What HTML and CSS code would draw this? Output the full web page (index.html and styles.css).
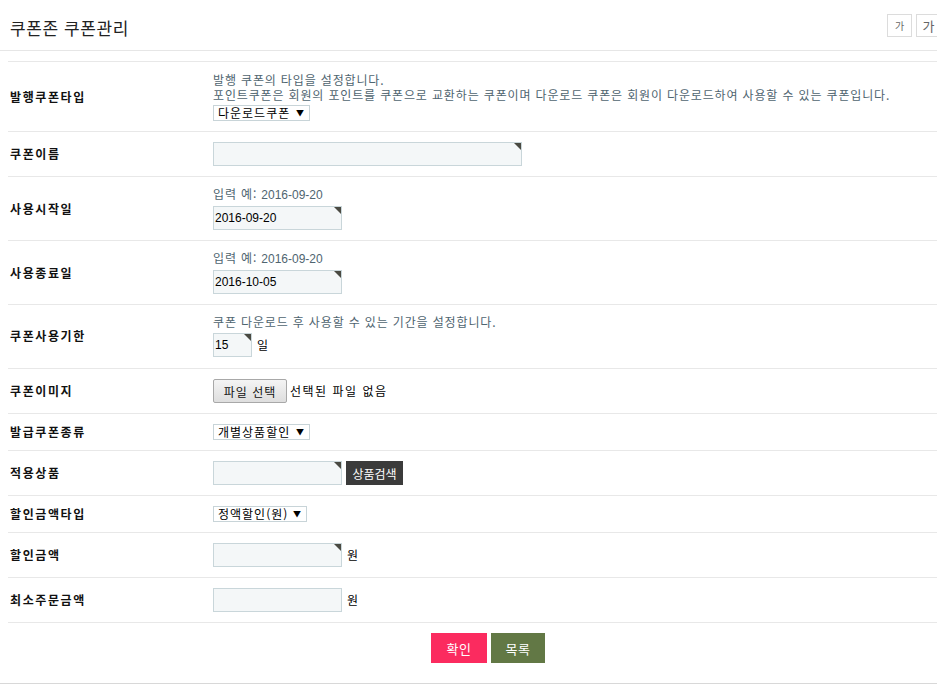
FILE: index.html
```html
<!DOCTYPE html>
<html lang="ko">
<head>
<meta charset="utf-8">
<title>쿠폰존 쿠폰관리</title>
<link rel="stylesheet" href="styles.css">
</head>
<body>
<header class="head">
  <h1 class="title">쿠폰존 쿠폰관리</h1>
  <div class="fontbtns">
    <button class="fbtn small" type="button">가</button>
    <button class="fbtn big" type="button">가</button>
  </div>
</header>
<main class="wrap">
  <div class="form">
    <div class="row">
      <div class="label">발행쿠폰타입</div>
      <div class="value stack wide">
        <p class="hint">발행 쿠폰의 타입을 설정합니다.<br>포인트쿠폰은 회원의 포인트를 쿠폰으로 교환하는 쿠폰이며 다운로드 쿠폰은 회원이 다운로드하여 사용할 수 있는 쿠폰입니다.</p>
        <div class="sel w96"><span>다운로드쿠폰</span><span class="arr">▼</span></div>
      </div>
    </div>
    <div class="row">
      <div class="label">쿠폰이름</div>
      <div class="value"><span class="inp req w309"></span></div>
    </div>
    <div class="row">
      <div class="label">사용시작일</div>
      <div class="value stack">
        <p class="hint">입력 예: <span class="num">2016-09-20</span></p>
        <span class="inp req w129">2016-09-20</span>
      </div>
    </div>
    <div class="row">
      <div class="label">사용종료일</div>
      <div class="value stack">
        <p class="hint">입력 예: <span class="num">2016-09-20</span></p>
        <span class="inp req w129">2016-10-05</span>
      </div>
    </div>
    <div class="row tall">
      <div class="label">쿠폰사용기한</div>
      <div class="value stack">
        <p class="hint">쿠폰 다운로드 후 사용할 수 있는 기간을 설정합니다.</p>
        <div class="line"><span class="inp req w39">15</span><span class="unit">일</span></div>
      </div>
    </div>
    <div class="row">
      <div class="label">쿠폰이미지</div>
      <div class="value line"><button class="filebtn" type="button">파일 선택</button><span class="unit">선택된 파일 없음</span></div>
    </div>
    <div class="row">
      <div class="label">발급쿠폰종류</div>
      <div class="value"><div class="sel w96"><span>개별상품할인</span><span class="arr">▼</span></div></div>
    </div>
    <div class="row">
      <div class="label">적용상품</div>
      <div class="value line"><span class="inp req w129"></span><button class="darkbtn" type="button">상품검색</button></div>
    </div>
    <div class="row">
      <div class="label">할인금액타입</div>
      <div class="value"><div class="sel w93"><span>정액할인(원)</span><span class="arr">▼</span></div></div>
    </div>
    <div class="row">
      <div class="label">할인금액</div>
      <div class="value line"><span class="inp req w129"></span><span class="unit">원</span></div>
    </div>
    <div class="row">
      <div class="label">최소주문금액</div>
      <div class="value line"><span class="inp w129"></span><span class="unit">원</span></div>
    </div>
  </div>
  <div class="actions">
    <button class="btn ok" type="button">확인</button>
    <button class="btn list" type="button">목록</button>
  </div>
</main>
</body>
</html>
```
FILE: styles.css
```css
* { box-sizing: border-box; }
html, body { margin: 0; padding: 0; background: #fff; }
body {
  font-family: "Noto Sans CJK KR", "Noto Sans", sans-serif;
  font-size: 12px;
  color: #000;
  width: 937px;
  overflow: hidden;
}
.head {
  height: 51px;
  border-bottom: 1px solid #e6e6e6;
  display: flex;
  justify-content: space-between;
  align-items: flex-start;
}
.title {
  margin: 0;
  padding: 17px 0 0 10px;
  font-size: 17px;
  font-weight: 400;
  line-height: 22px;
  color: #222;
  letter-spacing: 0.6px;
}
.fontbtns {
  display: flex;
  gap: 4px;
  padding-top: 14px;
  margin-right: -4px;
}
.fbtn {
  width: 25px;
  height: 23px;
  padding: 0;
  border: 1px solid #dcdcdc;
  background: #fff;
  color: #666;
  font-family: inherit;
  line-height: 20px;
}
.fbtn.small { font-size: 10px; }
.fbtn.big { font-size: 13px; }
.wrap {
  padding: 10px 0 0 8px;
  border-bottom: 1px solid #d8d8d8;
  height: 633px;
}
.form { border-top: 1px solid #e8e8e8; }
.row {
  display: flex;
  align-items: center;
  border-bottom: 1px solid #e8e8e8;
  padding: 10px 0;
}
.row.tall { padding-bottom: 11px; }
.label {
  width: 205px;
  padding-left: 2px;
  font-weight: 700;
  font-size: 12px;
  line-height: 16px;
  letter-spacing: 1.6px;
  color: #111;
}
.value { display: flex; }
.stack { flex-direction: column; align-items: flex-start; gap: 4px; }
.stack.wide { gap: 3px; }
.stack.wide .hint { line-height: 15px; }
.line { display: flex; align-items: center; }
.hint {
  margin: 0;
  color: #4f6570;
  font-size: 12px;
  line-height: 14px;
  letter-spacing: 0.85px;
}
.hint .num {
  letter-spacing: 0;
  font-family: "Liberation Sans", sans-serif;
}
.sel {
  height: 16px;
  border: 1px solid #c8d4d8;
  background: #fff;
  padding: 0 5px 0 4px;
  font-size: 12px;
  line-height: 14px;
  letter-spacing: 1px;
  display: flex;
  justify-content: space-between;
  align-items: center;
}
.sel .arr { font-size: 8px; letter-spacing: 0; }
.w96 { width: 97px; }
.w93 { width: 94px; }
.inp {
  position: relative;
  display: block;
  height: 24px;
  border: 1px solid #c9d6da;
  background: #f4f7f8;
  font-size: 12px;
  line-height: 22px;
  padding-left: 1px;
  font-family: "Liberation Sans", "Noto Sans CJK KR", sans-serif;
}
.inp.req::after {
  content: "";
  position: absolute;
  top: 0;
  right: 0;
  width: 0;
  height: 0;
  border-top: 7px solid #4a4a42;
  border-left: 7px solid transparent;
}
.w309 { width: 309px; }
.w129 { width: 129px; }
.w39 { width: 39px; }
.unit { margin-left: 5px; font-size: 12px; line-height: 16px; letter-spacing: 1.5px; }
.filebtn {
  height: 24px;
  width: 74px;
  padding: 0;
  border: 1px solid #a8a8a8;
  border-radius: 2px;
  background: linear-gradient(#f4f4f4, #dedede);
  font-family: inherit;
  font-size: 12px;
  letter-spacing: 1px;
  color: #111;
}
.line .filebtn + .unit { margin-left: 3px; }
.darkbtn {
  margin-left: 4px;
  height: 24px;
  width: 57px;
  padding: 0;
  border: 0;
  background: #3b3b3b;
  color: #fff;
  font-family: inherit;
  font-size: 12px;
}
.actions {
  display: flex;
  gap: 4px;
  padding: 10px 0 0 423px;
}
.btn {
  height: 30px;
  border: 0;
  color: #fff;
  font-family: inherit;
  font-size: 13px;
  letter-spacing: 0.5px;
  padding: 0;
}
.btn.ok { width: 56px; background: #fb2b5f; }
.btn.list { width: 54px; background: #627845; }
```
